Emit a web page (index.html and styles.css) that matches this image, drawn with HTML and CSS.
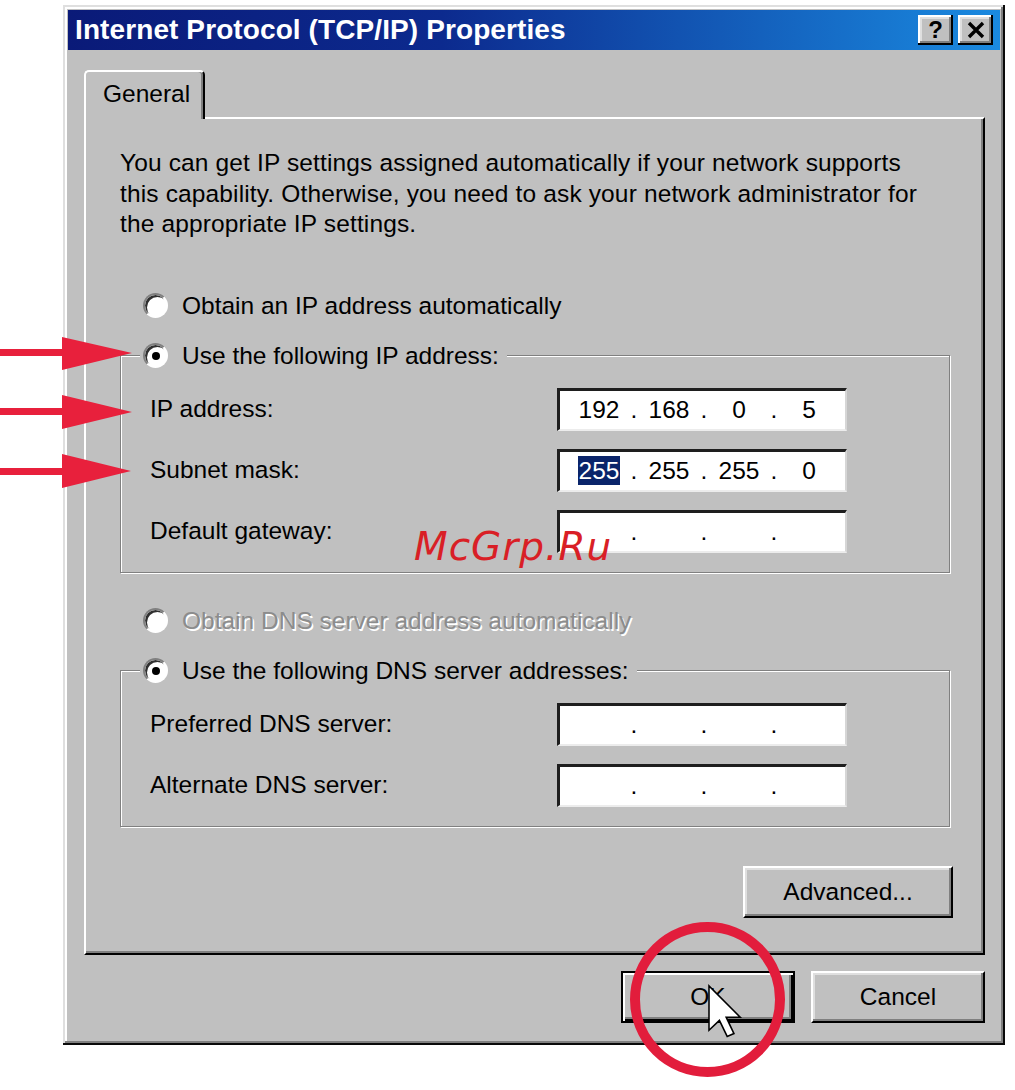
FILE: index.html
```html
<!DOCTYPE html>
<html lang="en">
<head>
    <meta charset="UTF-8">
    <title>Internet Protocol (TCP/IP) Properties</title>
    <link rel="stylesheet" href="styles.css">
</head>
<body>
    <div class="stage">
        <div class="window">
            <div class="titlebar">
                <span class="title">Internet Protocol (TCP/IP) Properties</span>
                <div class="caption-buttons">
                    <button class="cap-btn help">?</button>
                    <button class="cap-btn">
                        <svg width="20" height="18" viewBox="0 0 20 18"><path d="M3 2 L17 16 M17 2 L3 16" stroke="#000" stroke-width="3.4"/></svg>
                    </button>
                </div>
            </div>

            <div class="content">
                <div class="tabs">
                    <div class="tab">General</div>
                </div>

                <div class="panel">
                    <p class="intro">You can get IP settings assigned automatically if your network supports<br>this capability. Otherwise, you need to ask your network administrator for<br>the appropriate IP settings.</p>

                    <div class="radio-row first">
                        <span class="radio"></span>Obtain an IP address automatically
                    </div>

                    <fieldset class="group">
                        <legend><span class="radio checked"></span>Use the following IP address:</legend>
                        <div class="field-row">
                            <span>IP address:</span>
                            <div class="ip-box">
                                <span class="oct">192</span><span class="dot">.</span><span class="oct">168</span><span class="dot">.</span><span class="oct">0</span><span class="dot">.</span><span class="oct">5</span>
                            </div>
                        </div>
                        <div class="field-row">
                            <span>Subnet mask:</span>
                            <div class="ip-box">
                                <span class="oct"><span class="sel">255</span></span><span class="dot">.</span><span class="oct">255</span><span class="dot">.</span><span class="oct">255</span><span class="dot">.</span><span class="oct">0</span>
                            </div>
                        </div>
                        <div class="field-row">
                            <span>Default gateway:</span>
                            <div class="ip-box">
                                <span class="oct"></span><span class="dot">.</span><span class="oct"></span><span class="dot">.</span><span class="oct"></span><span class="dot">.</span><span class="oct"></span>
                            </div>
                        </div>
                    </fieldset>

                    <div class="radio-row disabled">
                        <span class="radio"></span>Obtain DNS server address automatically
                    </div>

                    <fieldset class="group">
                        <legend><span class="radio checked"></span>Use the following DNS server addresses:</legend>
                        <div class="field-row">
                            <span>Preferred DNS server:</span>
                            <div class="ip-box">
                                <span class="oct"></span><span class="dot">.</span><span class="oct"></span><span class="dot">.</span><span class="oct"></span><span class="dot">.</span><span class="oct"></span>
                            </div>
                        </div>
                        <div class="field-row">
                            <span>Alternate DNS server:</span>
                            <div class="ip-box">
                                <span class="oct"></span><span class="dot">.</span><span class="oct"></span><span class="dot">.</span><span class="oct"></span><span class="dot">.</span><span class="oct"></span>
                            </div>
                        </div>
                    </fieldset>

                    <div class="advanced-row">
                        <button class="btn advanced">Advanced...</button>
                    </div>
                </div>

                <div class="dialog-buttons">
                    <button class="btn default">OK</button>
                    <button class="btn">Cancel</button>
                </div>
            </div>
        </div>

        <!-- red marks drawn over the screenshot -->
        <svg class="marks" width="1015" height="1090" viewBox="0 0 1015 1090">
            <g fill="#e8203c">
                <rect x="0" y="349" width="66" height="7"/>
                <polygon points="62,337 132,353 62,370"/>
                <rect x="0" y="408" width="66" height="7"/>
                <polygon points="62,395 132,412 62,429"/>
                <rect x="0" y="468" width="66" height="7"/>
                <polygon points="62,454 131,471 62,488"/>
            </g>
            <g transform="translate(709 986) scale(2.6)">
                <polygon points="0,0 0,17 4,13.2 7,19.4 9.6,18.3 6.6,12 12,12" fill="#fff" stroke="#000" stroke-width="0.6" stroke-linejoin="miter"/>
            </g>
            <circle cx="707.5" cy="999.5" r="72.5" fill="none" stroke="#e21d3c" stroke-width="10"/>
        </svg>
        <div class="watermark">McGrp.Ru</div>
    </div>
</body>
</html>
```

FILE: styles.css
```css
body {
    margin: 0;
    background: #fff;
    font-family: "Liberation Sans", Arial, sans-serif;
    font-size: 24.5px;
    color: #000;
}
.stage {
    position: relative;
    width: 1015px;
    height: 1090px;
    overflow: hidden;
}
.window {
    box-sizing: border-box;
    width: 942px;
    height: 1040px;
    margin: 5px 0 0 63px;
    padding: 5px;
    background: #c0c0c0;
    box-shadow: inset -2px -2px 0 #0a0a0a, inset 2px 2px 0 #dfdfdf,
                inset -4px -4px 0 #808080, inset 4px 4px 0 #fff;
}
.titlebar {
    height: 40px;
    display: flex;
    align-items: center;
    justify-content: space-between;
    padding: 0 7px 0 7px;
    background: linear-gradient(90deg, #0a1a78 0%, #0c2a8e 40%, #1a8ae0 100%);
}
.title {
    color: #fff;
    font-weight: bold;
    font-size: 28px;
    letter-spacing: 0.1px;
}
.caption-buttons {
    display: flex;
    gap: 5px;
}
.cap-btn {
    width: 35px;
    height: 30px;
    padding: 0;
    border: none;
    background: #c0c0c0;
    display: flex;
    align-items: center;
    justify-content: center;
    font-family: "Liberation Sans", Arial, sans-serif;
    font-weight: bold;
    font-size: 24px;
    color: #000;
    box-shadow: inset -2px -2px 0 #000, inset 2px 2px 0 #fff,
                inset -4px -4px 0 #808080, inset 4px 4px 0 #dfdfdf;
}
.content {
    padding: 20px 15px 0 16px;
}
.tabs {
    display: flex;
    height: 47px;
}
.tab {
    position: relative;
    z-index: 1;
    box-sizing: border-box;
    width: 121px;
    height: 49px;
    margin-bottom: -2px;
    padding: 8px 0 0 17px;
    background: #c0c0c0;
    border-top: 2px solid #fff;
    border-left: 2px solid #fff;
    border-right: 2px solid #000;
    border-radius: 5px 5px 0 0;
    box-shadow: inset -2px 0 0 #808080;
}
.panel {
    box-sizing: border-box;
    height: 838px;
    padding: 29px 33px 0 34px;
    border: 2px solid;
    border-color: #fff #000 #000 #fff;
    box-shadow: inset -2px -2px 0 #808080;
}
.intro {
    margin: 0;
    line-height: 30.5px;
    letter-spacing: 0.14px;
}
.radio-row {
    display: flex;
    align-items: center;
    height: 36px;
    padding-left: 23px;
}
.radio-row.first {
    margin-top: 48px;
}
.radio-row.disabled {
    margin-top: 30px;
    color: #8c8c8c;
    text-shadow: 1.5px 1.5px 0 #fff;
}
.radio {
    position: relative;
    box-sizing: border-box;
    width: 25px;
    height: 25px;
    margin-right: 14px;
    flex-shrink: 0;
    border-radius: 50%;
    background: #fff;
    border: 2px solid;
    border-color: #808080 #fff #fff #808080;
    box-shadow: inset 2px 2px 0 #303030;
}
.radio.checked::after {
    content: "";
    position: absolute;
    left: 7px;
    top: 7px;
    width: 8px;
    height: 8px;
    border-radius: 50%;
    background: #000;
}
.group {
    margin: 14px 0 0 0;
    padding: 14px 0 19px 29px;
    min-width: 0;
    border: 1px solid #808080;
    box-shadow: inset 1px 1px 0 #fff, 1px 1px 0 #fff;
    display: flex;
    flex-direction: column;
    gap: 18px;
}
.group legend {
    display: flex;
    align-items: center;
    height: 36px;
    margin-left: -10px;
    padding: 0 8px 0 3px;
    background: #c0c0c0;
}
.field-row {
    display: grid;
    grid-template-columns: 407px 290px;
    align-items: center;
}
.ip-box {
    box-sizing: border-box;
    height: 43px;
    display: flex;
    align-items: center;
    padding-left: 9px;
    background: #fff;
    border-style: solid;
    border-width: 3px 2px 2px 3px;
    border-color: #1e1e1e #d6d6d6 #ececec #1e1e1e;
}
.oct {
    width: 60px;
    text-align: center;
}
.dot {
    width: 10px;
    text-align: center;
}
.sel {
    background: #0a246a;
    color: #fff;
    padding: 1px 1px;
}
.advanced-row {
    display: flex;
    justify-content: flex-end;
    margin: 39px -3px 0 0;
}
.btn {
    box-sizing: border-box;
    height: 52px;
    padding: 0;
    background: #c0c0c0;
    font-family: "Liberation Sans", Arial, sans-serif;
    font-size: 24.5px;
    color: #000;
    border: 2px solid;
    border-color: #fff #000 #000 #fff;
    box-shadow: inset -2px -2px 0 #808080, inset 2px 2px 0 #dfdfdf;
}
.btn.advanced {
    width: 210px;
}
.dialog-buttons {
    display: flex;
    justify-content: flex-end;
    gap: 16px;
    margin-top: 16px;
}
.dialog-buttons .btn {
    width: 174px;
}
.btn.default {
    border-color: #000;
    box-shadow: inset 2px 2px 0 #fff, inset -2px -2px 0 #000, inset -4px -4px 0 #808080;
}
.marks {
    position: absolute;
    left: 0;
    top: 0;
    pointer-events: none;
}
.watermark {
    position: absolute;
    left: 414px;
    top: 527px;
    font-family: "DejaVu Sans", sans-serif;
    font-style: italic;
    font-size: 39px;
    line-height: 39px;
    letter-spacing: 1px;
    color: #d91f26;
}
```
